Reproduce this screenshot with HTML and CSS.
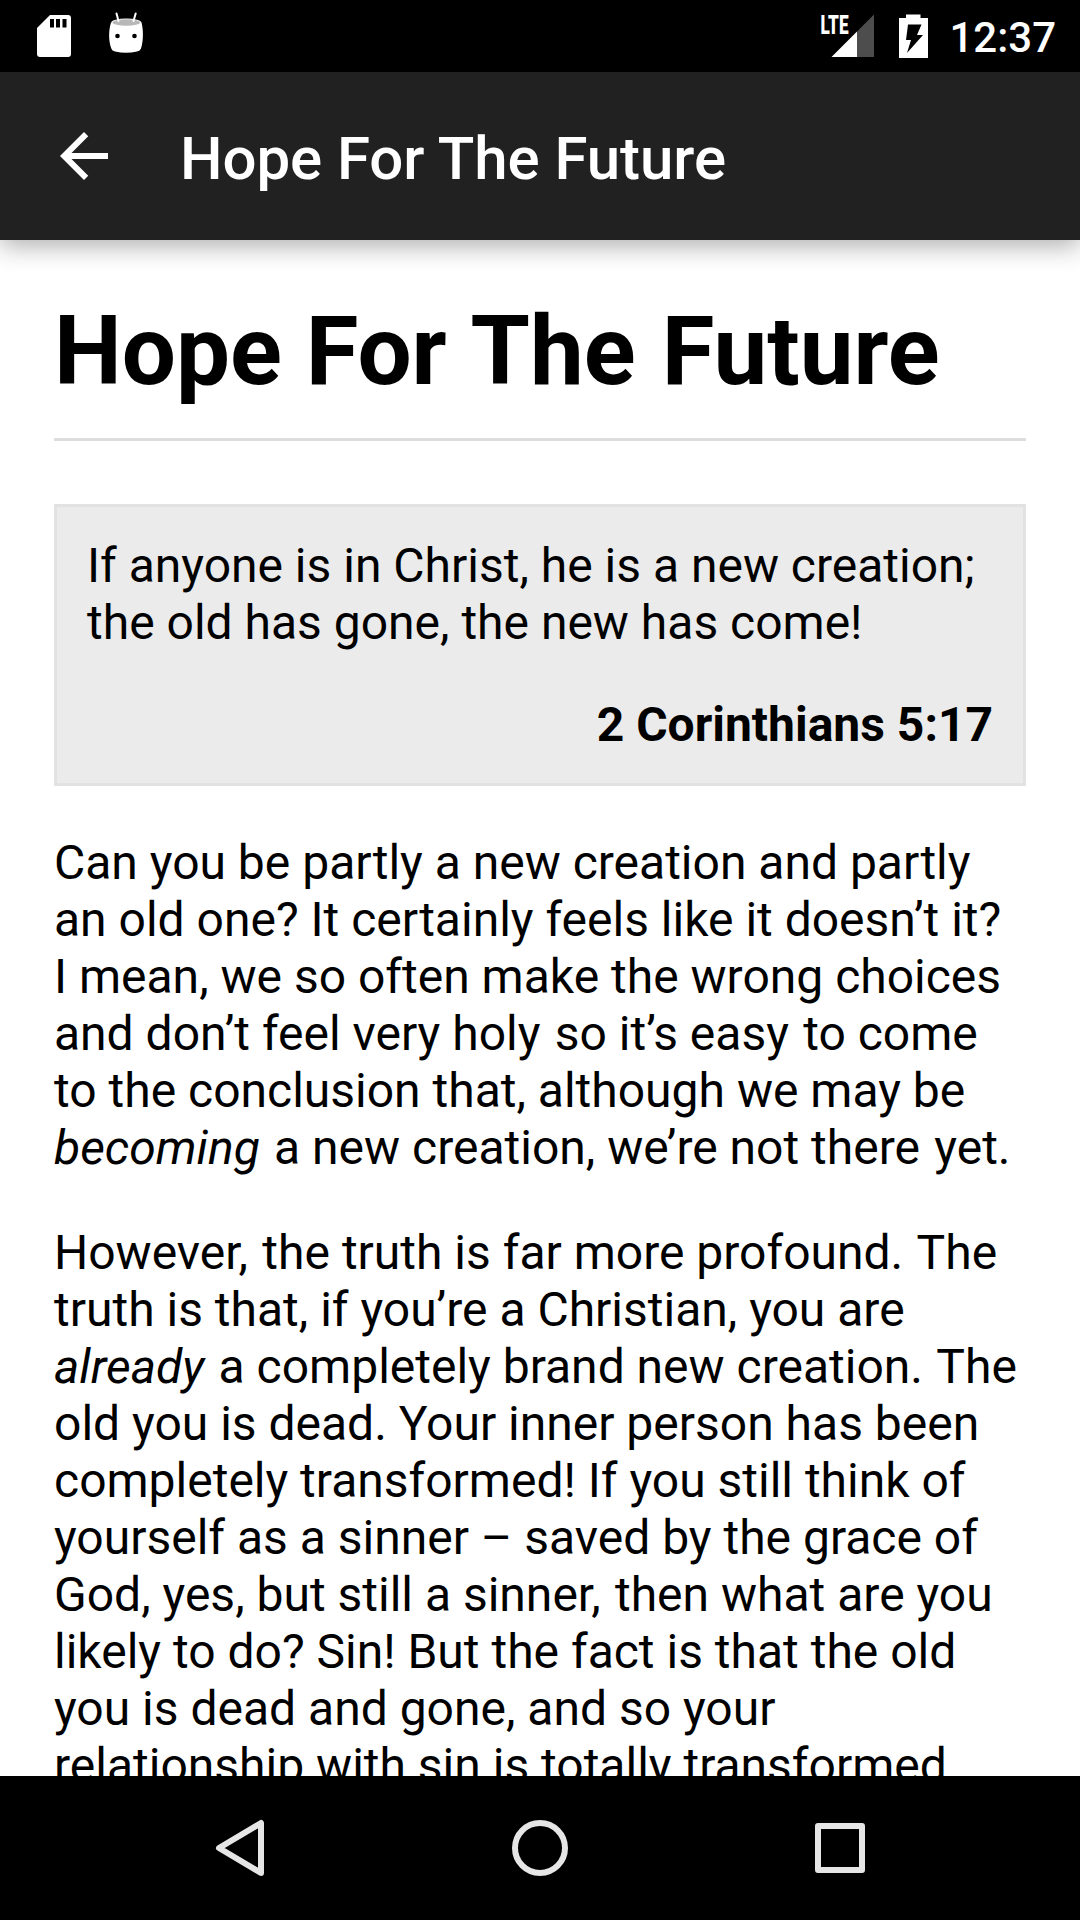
FILE: index.html
```html
<!DOCTYPE html>
<html lang="en">
<head>
    <meta charset="UTF-8">
    <meta name="viewport" content="width=device-width, initial-scale=1.0">
    <title>Hope For The Future</title>
    <link rel="stylesheet" href="styles.css">
</head>
<body>
    <div class="status-bar">
        <svg class="notifications" width="150" height="72" viewBox="0 0 150 72">
            <!-- sd card -->
            <path fill="#fff" d="M50 15H68Q71 15 71 18V54Q71 57 68 57H40Q37 57 37 54V28Z"/>
            <path fill="#000" d="M50 19h4v8.500h-4zM56 19h4v8.500h-4zM62.500 19h4v8.500h-4z"/>
            <!-- android head -->
            <path fill="#fff" d="M111 22.500H141.500C143.500 30 143.500 41 141 48.500Q140.300 50.800 137 51.500Q126 54 115 51.500Q112 50.800 111.300 48.500C108.500 41 108.500 30 111 22.500Z"/>
            <ellipse cx="126.300" cy="22.500" rx="15" ry="4" fill="#fff"/>
            <ellipse cx="126.300" cy="22.500" rx="13.800" ry="3.300" fill="#b8b8b8"/>
            <path stroke="#fff" stroke-width="2" stroke-linecap="round" d="M116.500 13.500L118.500 21M135.700 13.500L133.500 21"/>
            <circle cx="117.500" cy="36" r="2.300" fill="#000"/>
            <circle cx="134.500" cy="36" r="2.300" fill="#000"/>
        </svg>
        <div class="system">
            <svg width="120" height="72" viewBox="815 0 120 72">
                <!-- signal -->
                <text class="lte" x="820.500" y="33.500" textLength="28" lengthAdjust="spacingAndGlyphs">LTE</text>
                <path fill="#4d4d4d" d="M874 14.500V57H857V31.500Z"/>
                <path fill="#fff" d="M831.500 57L857 31.500V57Z"/>
                <!-- battery -->
                <path fill="#fff" d="M906 14.500H920.500V18H928V58H899V18H906Z"/>
                <path fill="#000" d="M908 24.500H921.500L917 35H923L907 53L911 40H906Z"/>
            </svg>
            <span class="clock">12:37</span>
        </div>
    </div>

    <div class="app-bar">
        <svg class="back" width="72" height="72" viewBox="0 0 24 24">
            <path fill="#fff" d="M20 11H7.830l5.590-5.590L12 4l-8 8 8 8 1.410-1.410L7.830 13H20v-2z"/>
        </svg>
        <span class="title">Hope For The Future</span>
    </div>

    <div class="content">
        <h1>Hope For<span class="wide"> The Future</span></h1>
        <blockquote>
            <p>If anyone is in Christ, he is a new creation; the old has gone, the new has come!</p>
            <p class="verse">2 Corinthians 5:17</p>
        </blockquote>
        <p>Can you be partly a new creation and partly an old one? It certainly feels like it doesn’t it? I mean, we so often make the wrong choices and don’t feel very holy<span class="wide"> so</span> it’s easy<span class="wide"> to</span> come to the conclusion that, although we may be <em>becoming</em><span class="wide"> a</span> new creation, we’re not there<span class="wide"> yet.</span></p>
        <p>However,<span class="wide"> the</span> truth is far more profound.<span class="wide"> The</span> truth is that, if you’re a Christian, you are <em>already</em><span class="wide"> a</span> completely brand new creation.<span class="wide"> The</span> old you is dead. Your inner person has been completely transformed! If you still think of yourself as a sinner – saved by the grace of God, yes, but still a sinner,<span class="wide"> then</span> what are you likely to do? Sin! But the fact is that the old you is dead and gone, and so your relationship with sin is totally transformed</p>
    </div>

    <div class="nav-bar">
        <svg width="1080" height="144" viewBox="0 0 1080 144" fill="none" stroke="#e6e6e6" stroke-width="6" stroke-linejoin="round">
            <path d="M261 47V97L219 72Z"/>
            <circle cx="540" cy="72" r="25"/>
            <rect x="818" y="50" width="44" height="44"/>
        </svg>
    </div>
</body>
</html>
```
FILE: styles.css
```css
* {
    box-sizing: border-box;
}

body {
    height: 100vh;
    margin: 0;
    display: flex;
    flex-direction: column;
    overflow: hidden;
    background: #fff;
    color: #000;
    font-family: Roboto, "Liberation Sans", sans-serif;
}

svg {
    display: block;
}

.status-bar {
    flex: none;
    height: 72px;
    display: flex;
    justify-content: space-between;
    background: #000;
}

.system {
    display: flex;
    padding-right: 24px;
}

.lte {
    font-size: 26px;
    font-weight: 900;
    fill: #fff;
}

.clock {
    margin-left: 14px;
    font-size: 42px;
    font-weight: 500;
    line-height: 75px;
    color: #fff;
}

.app-bar {
    flex: none;
    z-index: 1;
    height: 168px;
    padding-left: 48px;
    display: flex;
    align-items: center;
    gap: 60px;
    background: #212121;
    box-shadow: 0 6px 24px rgba(0, 0, 0, 0.32);
}

.title {
    padding-top: 4px;
    font-size: 60px;
    font-weight: 500;
    letter-spacing: -0.08px;
    color: #fff;
}

.content {
    flex: 1;
    min-height: 0;
    padding: 55px 54px 0;
    overflow: hidden;
    font-size: 48px;
    line-height: 57px;
}

h1 {
    margin: 0 0 63px;
    padding-bottom: 30px;
    border-bottom: 3px solid #ddd;
    font-size: 96px;
    line-height: 113px;
}

.wide {
    word-spacing: 2.4px;
}

blockquote {
    margin: 0 0 48px;
    padding: 30px;
    background: #ebebeb;
    border: 3px solid #e2e2e2;
}

p {
    margin: 0 0 48px;
}

blockquote p {
    margin: 0 0 45px;
}

blockquote .verse {
    margin: 0;
    font-weight: 700;
    text-align: right;
}

.nav-bar {
    flex: none;
    height: 144px;
    background: #000;
}
```
